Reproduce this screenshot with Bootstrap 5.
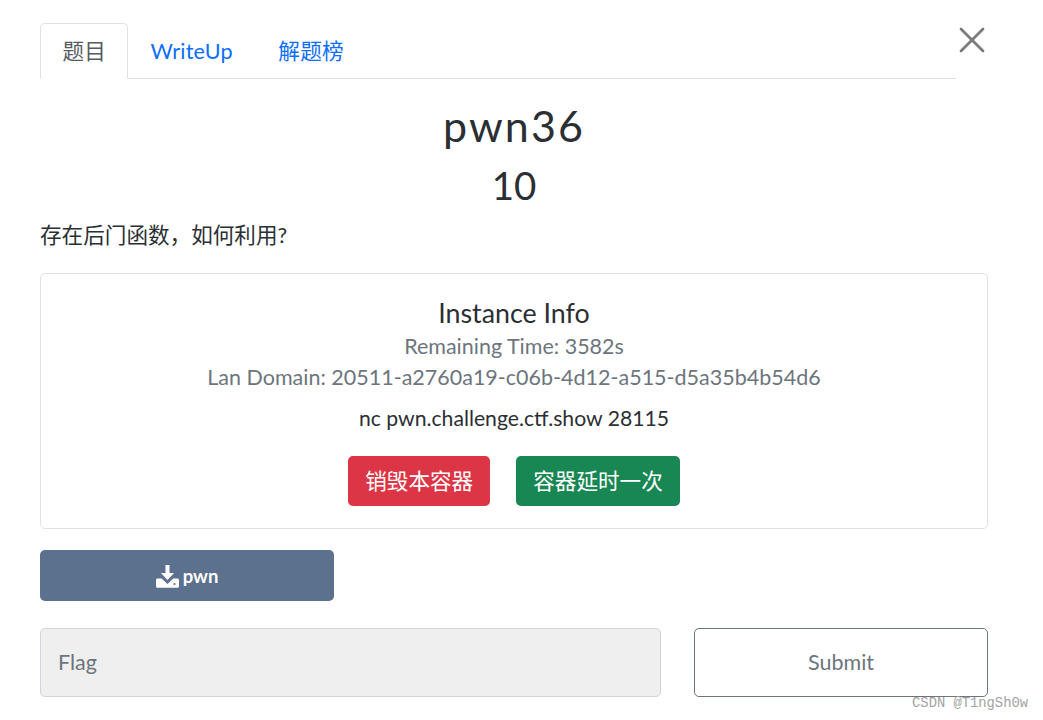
<!DOCTYPE html>
<html lang="zh-CN">
<head>
  <meta charset="UTF-8">
  <title>pwn36</title>
  <link href="https://cdn.jsdelivr.net/npm/bootstrap@5.3.0/dist/css/bootstrap.min.css" rel="stylesheet">
  <style>
    html, body { height: 720px; overflow: hidden; }
    body {
      font-family: Lato, "Noto Sans CJK SC", sans-serif;
      font-size: 21.6px;
      color: #2b2f34;
      background: #fff;
    }
    .shell { width: 948px; margin-left: 40px; padding-top: 23px; position: relative; }
    .tabs-wrap { width: 916px; }
    .tabs-wrap .nav-link {
      font-size: 21.6px;
      line-height: 33px;
      padding: 11px 22px 10px 21.5px;
      height: 56px;
      letter-spacing: .2px;
      border-radius: 5px 5px 0 0;
    }
    .tabs-wrap .nav-link.active { padding-left: 21.5px; padding-right: 21px; color: #555b61; }
    .close-x { position: absolute; left: 919px; top: 27px; width: 26px; height: 26px; padding: 0; border: 0; background: none; line-height: 0; }
    .chal-name { font-size: 43px; font-weight: 400; letter-spacing: 2.1px; line-height: 50px; margin: 22px 0 0; }
    .chal-value { font-size: 38.5px; font-weight: 400; line-height: 50px; margin: 9px 0 0; }
    .chal-desc { font-size: 21.6px; line-height: 33px; margin: 9px 0 21px; }
    .inst-box { height: 256px; border-radius: 5px; padding: 21px 0 0; border-color: #dee2e6; }
    .inst-title { font-size: 26.8px; line-height: 32px; margin: 2px 0 1.5px; font-weight: 400; }
    .inst-sub { font-size: 21.5px; line-height: 31px; color: #6c757d; }
    .inst-cmd { font-size: 21.2px; line-height: 32px; margin-top: 9px; }
    .inst-btns { margin-top: 22px; gap: 26px; }
    .inst-btns .btn { font-size: 21.6px; height: 50px; padding: 0 17px; line-height: 50px; border-radius: 5px; border: 0; }
    .dl-btn {
      width: 294px; height: 51px; margin-top: 21px; background: #5c718d; border: 0; border-radius: 5px;
      color: #fff; font-size: 18.5px; font-weight: 700; padding: 2px 0 0; gap: 4px;
    }
    .dl-btn:hover { background: #5c718d; color: #fff; }
    .flag-row { margin-top: 27px; }
    .flag-input.form-control {
      width: 621px; height: 69px; background: #efefef; border-color: #ced4da; border-radius: 5px;
      font-size: 21.5px; padding: 0 17px 2px; color: #6c757d;
    }
    .flag-input::placeholder { color: #6c757d; opacity: 1; }
    .submit-btn { width: 294px; height: 69px; font-size: 21.5px; border-radius: 5px; margin-left: 33px; padding: 0; border-color: #6c757d; color: #6c757d; }
    .watermark {
      position: absolute; right: -40px; top: 696px; font-family: "Liberation Mono", monospace;
      font-size: 13.8px; line-height: 15px; color: #a3a3a3;
    }
  </style>
</head>
<body>
  <div class="shell">
    <div class="tabs-wrap">
      <ul class="nav nav-tabs">
        <li class="nav-item"><a class="nav-link active" href="#">题目</a></li>
        <li class="nav-item"><a class="nav-link" href="#">WriteUp</a></li>
        <li class="nav-item"><a class="nav-link" href="#">解题榜</a></li>
      </ul>
    </div>
    <button class="close-x" type="button" aria-label="Close">
      <svg width="26" height="26" viewBox="0 0 26 26"><path d="M2 2 L24 24 M24 2 L2 24" stroke="#7b7b7b" stroke-width="2.8" stroke-linecap="round" fill="none"/></svg>
    </button>

    <h3 class="chal-name text-center">pwn36</h3>
    <h3 class="chal-value text-center">10</h3>
    <p class="chal-desc">存在后门函数，如何利用?</p>

    <div class="inst-box border text-center">
      <h4 class="inst-title">Instance Info</h4>
      <div class="inst-sub">Remaining Time: 3582s</div>
      <div class="inst-sub">Lan Domain: 20511-a2760a19-c06b-4d12-a515-d5a35b4b54d6</div>
      <div class="inst-cmd">nc pwn.challenge.ctf.show 28115</div>
      <div class="inst-btns d-flex justify-content-center">
        <button class="btn btn-danger" type="button">销毁本容器</button>
        <button class="btn btn-success" type="button">容器延时一次</button>
      </div>
    </div>

    <button class="dl-btn btn d-flex align-items-center justify-content-center" type="button">
      <svg width="23" height="23" viewBox="0 0 23 23"><path fill="#fff" d="M9.5 0h4v8h4.6l-6.6 7-6.6-7h4.6z"/><path fill="#fff" d="M1.5 13.5h4.2l5.8 5.6 5.8-5.6h4.2c.8 0 1.5.7 1.5 1.5v6.2c0 .8-.7 1.5-1.5 1.5h-20c-.8 0-1.5-.7-1.5-1.5V15c0-.8.7-1.5 1.5-1.5z"/><circle cx="18.5" cy="19" r="1.1" fill="#5c718d"/></svg>
      <span>pwn</span>
    </button>

    <form class="flag-row d-flex" onsubmit="return false">
      <input class="flag-input form-control" type="text" placeholder="Flag">
      <button class="submit-btn btn btn-outline-secondary" type="submit">Submit</button>
    </form>
    <div class="watermark">CSDN @T1ngSh0w</div>
  </div>
</body>
</html>
